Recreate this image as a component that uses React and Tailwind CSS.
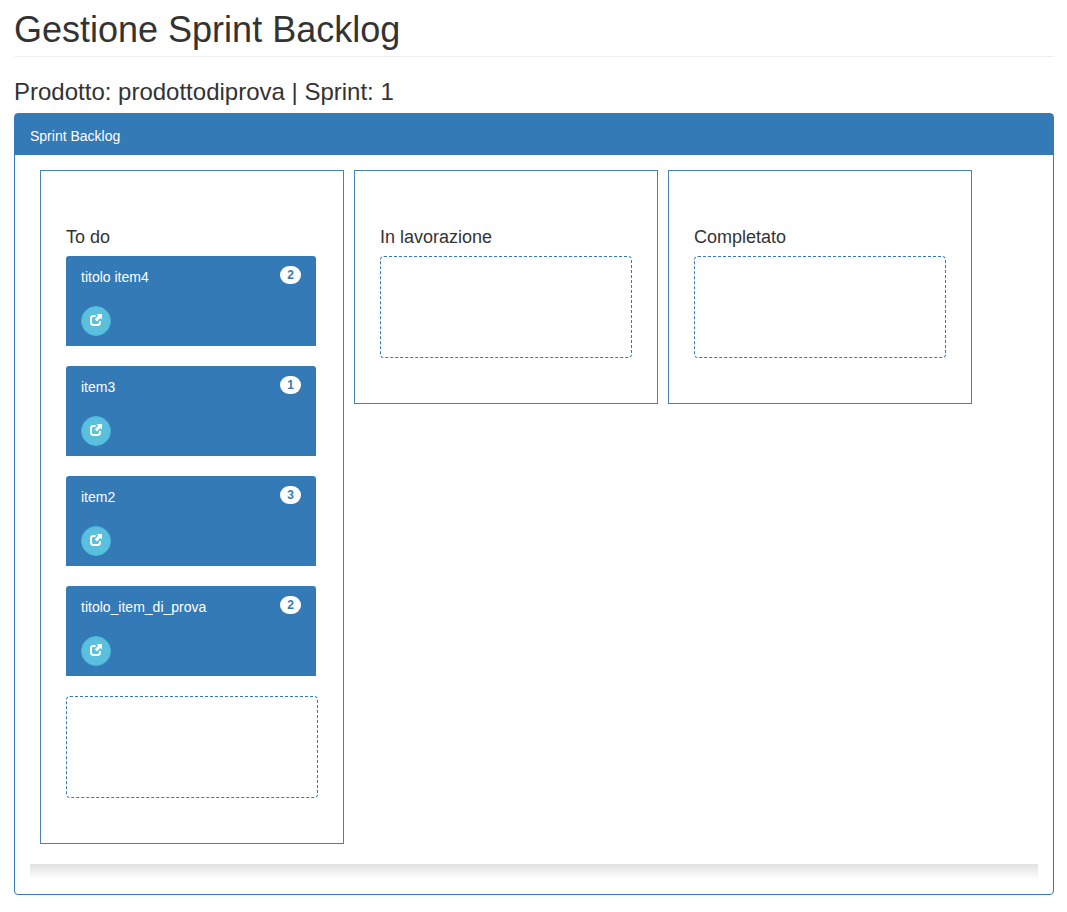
const columns = [
  {
    title: "To do",
    items: [
      { title: "titolo item4", points: 2 },
      { title: "item3", points: 1 },
      { title: "item2", points: 3 },
      { title: "titolo_item_di_prova", points: 2 },
    ],
  },
  { title: "In lavorazione", items: [] },
  { title: "Completato", items: [] },
];

function OpenIcon() {
  return (
    <svg viewBox="0 0 12 12" className="size-3" fill="none" aria-hidden="true">
      <path
        d="M5.6 2H3.6Q1 2 1 4.4V8.6Q1 11 3.6 11H7.6Q10 11 10 8.6V7"
        stroke="currentColor"
        strokeWidth="2"
      />
      <path
        d="M6.6 0H12V5.4L10.3 3.9L7 7.4L4.8 5.2L8.2 1.8Z"
        fill="currentColor"
      />
    </svg>
  );
}

function Card({ title, points }) {
  return (
    <li className="flex h-[90px] w-[250px] flex-col justify-between rounded-t-[3px] bg-[#337ab7] px-[15px] py-2.5 text-white">
      <div className="flex items-start justify-between">
        <span className="pt-px text-sm leading-5">{title}</span>
        <span className="rounded-full bg-white px-[7px] text-xs leading-[18px] font-bold text-[#337ab7]">
          {points}
        </span>
      </div>
      <button
        type="button"
        aria-label={"Apri " + title}
        className="flex size-[30px] items-center justify-center rounded-full border border-[#46b8da] bg-[#5bc0de] pb-0.5"
      >
        <OpenIcon />
      </button>
    </li>
  );
}

function Column({ title, items }) {
  return (
    <section className="border border-[#4682b4] px-[25px] pt-14 pb-[45px]">
      <h4 className="mb-[9px] text-lg leading-5 font-normal">{title}</h4>
      <ul className="flex flex-col gap-5">
        {items.map((item) => (
          <Card key={item.title} {...item} />
        ))}
        <li className="h-[102px] w-[252px] rounded border border-dashed border-[#337ab7]" />
      </ul>
    </section>
  );
}

export default function App() {
  return (
    <main className="pt-2.5 pr-[13px] pb-4 pl-3.5 font-['Liberation_Sans',Arial,sans-serif] text-[#333]">
      <h1 className="border-b border-[#eee] pb-1.5 text-4xl leading-10 font-normal">
        Gestione Sprint Backlog
      </h1>
      <h3 className="mt-[22px] mb-2 text-2xl leading-[26px] font-normal">
        Prodotto: prodottodiprova | Sprint: 1
      </h3>
      <div className="rounded border border-[#337ab7]">
        <div className="bg-[#337ab7] px-[15px] pt-3 pb-[9px] text-sm leading-5 text-white">
          Sprint Backlog
        </div>
        <div className="p-[15px]">
          <div className="flex flex-wrap items-start gap-2.5 px-2.5">
            {columns.map((column) => (
              <Column key={column.title} {...column} />
            ))}
          </div>
          <div className="mt-5 h-[15px] bg-linear-to-b from-[#e0e0e0] to-white" />
        </div>
      </div>
    </main>
  );
}
